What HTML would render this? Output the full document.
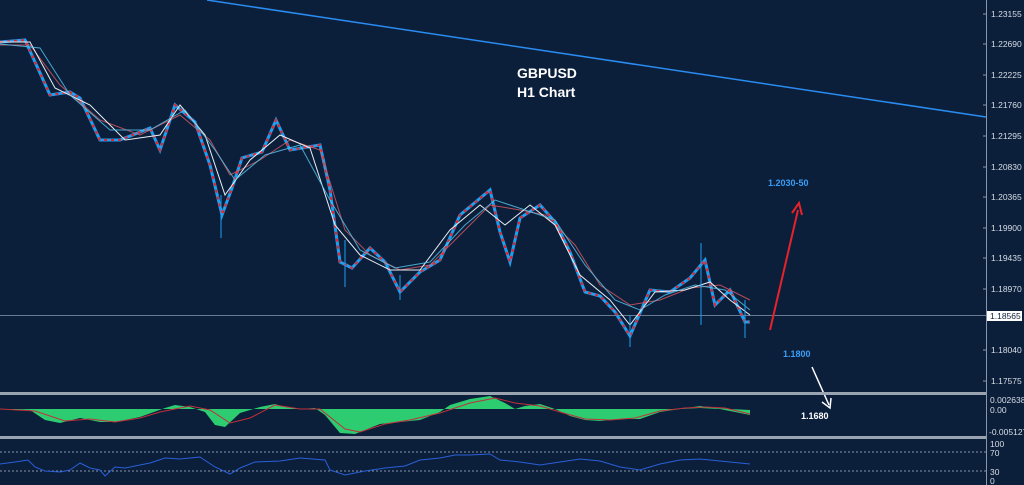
<!DOCTYPE html>
<html><head><meta charset="utf-8"><style>
html,body{margin:0;padding:0;background:#0b1f3b;width:1024px;height:485px;overflow:hidden}
svg{display:block}
text{font-family:"Liberation Sans",sans-serif}
</style></head><body>
<svg width="1024" height="485" viewBox="0 0 1024 485">
<rect width="1024" height="485" fill="#0b1f3b"/>
<!-- axis -->
<line x1="986.5" y1="0" x2="986.5" y2="485" stroke="#8a96a8" stroke-width="1"/>
<g fill="#d8dde5" font-size="8.5">
<text x="991" y="17">1.23155</text>
<text x="991" y="47">1.22690</text>
<text x="991" y="78">1.22225</text>
<text x="991" y="108">1.21760</text>
<text x="991" y="139">1.21295</text>
<text x="991" y="170">1.20830</text>
<text x="991" y="200">1.20365</text>
<text x="991" y="231">1.19900</text>
<text x="991" y="261">1.19435</text>
<text x="991" y="292">1.18970</text>
<text x="991" y="353">1.18040</text>
<text x="991" y="384">1.17575</text>
<text x="990" y="403">0.002638</text>
<text x="990" y="413">0.00</text>
<text x="989" y="435">-0.005127</text>
<text x="990" y="447">100</text>
<text x="990" y="456">70</text>
<text x="990" y="475">30</text>
<text x="990" y="484">0</text>
</g>
<g stroke="#8a96a8">
<line x1="983" y1="14" x2="986" y2="14"/><line x1="983" y1="44" x2="986" y2="44"/><line x1="983" y1="75" x2="986" y2="75"/><line x1="983" y1="105" x2="986" y2="105"/><line x1="983" y1="136" x2="986" y2="136"/><line x1="983" y1="167" x2="986" y2="167"/><line x1="983" y1="197" x2="986" y2="197"/><line x1="983" y1="228" x2="986" y2="228"/><line x1="983" y1="258" x2="986" y2="258"/><line x1="983" y1="289" x2="986" y2="289"/><line x1="983" y1="350" x2="986" y2="350"/><line x1="983" y1="381" x2="986" y2="381"/>
</g>
<rect x="987" y="311" width="35" height="10" fill="#fff"/>
<text x="990" y="319" font-size="8.5" fill="#0b1f3b">1.18565</text>
<!-- horizontal line -->
<line x1="0" y1="315.5" x2="986" y2="315.5" stroke="#6b7a90" stroke-width="1"/>
<!-- trendline -->
<line x1="207" y1="0" x2="986" y2="117" stroke="#2a8cf0" stroke-width="1.5"/>
<!-- price -->
<polyline fill="none" stroke="#1e9ff0" stroke-width="3" points="0,42 25,40 35,62 50,95 70,92 80,98 100,140 120,140 150,128 160,150 175,105 195,122 210,165 222,215 232,188 242,158 262,152 276,120 290,150 320,145 330,190 340,262 352,268 370,248 385,262 400,292 420,272 440,260 460,215 490,190 500,232 510,262 520,218 540,205 555,222 570,252 585,292 600,296 615,312 630,336 650,290 670,292 690,278 705,260 715,305 730,290 745,322 750,322"/>
<polyline fill="none" stroke="#e8222a" stroke-width="2" stroke-dasharray="3 4" points="0,42 25,40 35,62 50,95 70,92 80,98 100,140 120,140 150,128 160,150 175,105 195,122 210,165 222,215 232,188 242,158 262,152 276,120 290,150 320,145 330,190 340,262 352,268 370,248 385,262 400,292 420,272 440,260 460,215 490,190 500,232 510,262 520,218 540,205 555,222 570,252 585,292 600,296 615,312 630,336 650,290 670,292 690,278 705,260 715,305 730,290 745,322 750,322"/>
<polyline fill="none" stroke="#e05a60" stroke-width="1" opacity=".8" points="0,45 30,45 60,85 100,120 140,135 180,115 210,140 230,175 260,160 290,140 320,150 345,230 370,255 400,270 430,265 460,235 490,205 520,210 545,215 575,245 600,285 630,305 660,300 690,288 720,285 750,300"/>
<polyline fill="none" stroke="#e8eef5" stroke-width="1" points="0,42 30,42 55,88 90,105 125,140 160,135 180,105 205,135 225,195 250,160 280,135 310,148 335,225 360,255 390,270 420,270 450,230 480,205 505,225 530,205 555,225 580,275 610,300 630,325 655,292 685,290 710,282 730,300 750,315"/>
<polyline fill="none" stroke="#58c8f0" stroke-width="1" opacity=".8" points="0,44 40,48 70,95 110,130 150,130 185,110 215,150 235,180 265,155 300,145 330,200 360,250 395,268 430,262 465,225 495,200 525,210 555,220 585,265 615,300 640,310 665,295 695,285 725,290 750,310"/>
<!-- wicks -->
<g stroke="#1e9ff0" stroke-width="1"><line x1="221" y1="195" x2="221" y2="238"/><line x1="345" y1="240" x2="345" y2="287"/><line x1="630" y1="315" x2="630" y2="347"/><line x1="701" y1="243" x2="701" y2="325"/><line x1="745" y1="300" x2="745" y2="338"/><line x1="400" y1="275" x2="400" y2="300"/></g>
<!-- titles -->
<text x="517" y="78" font-size="14" font-weight="bold" fill="#fff">GBPUSD</text>
<text x="517" y="97" font-size="14" font-weight="bold" fill="#fff">H1 Chart</text>
<text x="768" y="186" font-size="9" font-weight="bold" fill="#3a9cf5">1.2030-50</text>
<text x="783" y="357" font-size="9" font-weight="bold" fill="#3a9cf5">1.1800</text>
<text x="801" y="419" font-size="9" font-weight="bold" fill="#fff">1.1680</text>
<!-- arrows -->
<line x1="770" y1="330" x2="798" y2="210" stroke="#e8222a" stroke-width="2"/>
<polyline points="792,213 799,203 802,215" fill="none" stroke="#e8222a" stroke-width="2"/>
<line x1="812" y1="367" x2="829" y2="405" stroke="#fff" stroke-width="1.5"/>
<polyline points="822,402 830,408 831,398" fill="none" stroke="#fff" stroke-width="1.5"/>
<!-- separators -->
<rect x="0" y="392" width="986" height="3" fill="#9aa3b0"/>
<rect x="0" y="436" width="986" height="3" fill="#9aa3b0"/>
<!-- MACD -->
<path fill="#2ecc71" d="M0,409 L30,410 L45,420 L60,423 L80,418 L100,422 L115,422 L140,417 L165,408 L175,405 L190,407 L205,412 L215,425 L225,427 L240,413 L260,407 L275,404 L285,407 L300,409 L315,408 L325,415 L340,433 L355,434 L380,424 L400,422 L420,420 L440,412 L450,405 L470,399 L490,396 L505,403 L515,409 L525,406 L540,404 L555,409 L570,416 L585,420 L600,421 L620,419 L640,419 L660,412 L680,409 L700,406 L715,408 L730,409 L750,410 L750,415 L735,412 L720,409 L700,408 L680,409 L660,409 L630,409 L600,409 L560,409 L540,409 L520,409 L500,409 L470,409 L440,409 L400,409 L350,409 L300,409 L250,409 L200,409 L150,409 L100,409 L0,409Z"/>
<polyline fill="none" stroke="#c0303a" stroke-width="1" points="0,409 35,411 65,421 90,419 115,422 140,418 160,412 190,406 210,410 230,423 250,418 275,405 300,409 320,409 345,429 360,432 385,424 410,420 440,413 470,403 495,398 515,403 540,406 560,412 585,419 610,420 635,418 660,411 685,408 705,407 725,408 750,414"/>
<!-- RSI -->
<line x1="0" y1="452" x2="986" y2="452" stroke="#8a96a8" stroke-dasharray="2 2"/>
<line x1="0" y1="471" x2="986" y2="471" stroke="#8a96a8" stroke-dasharray="2 2"/>
<polyline fill="none" stroke="#2a5fd8" stroke-width="1" points="0,464 15,462 28,460 35,467 45,471 60,472 70,470 80,463 90,468 100,470 105,476 115,467 125,468 135,466 150,463 165,458 180,459 200,457 215,467 230,474 240,468 255,462 280,461 300,458 325,460 330,470 345,475 365,471 385,468 405,466 420,460 440,458 455,455 470,455 490,454 500,460 520,462 540,465 560,462 580,459 600,461 620,467 640,470 660,464 680,460 700,459 720,461 750,464"/>
</svg>
</body></html>
